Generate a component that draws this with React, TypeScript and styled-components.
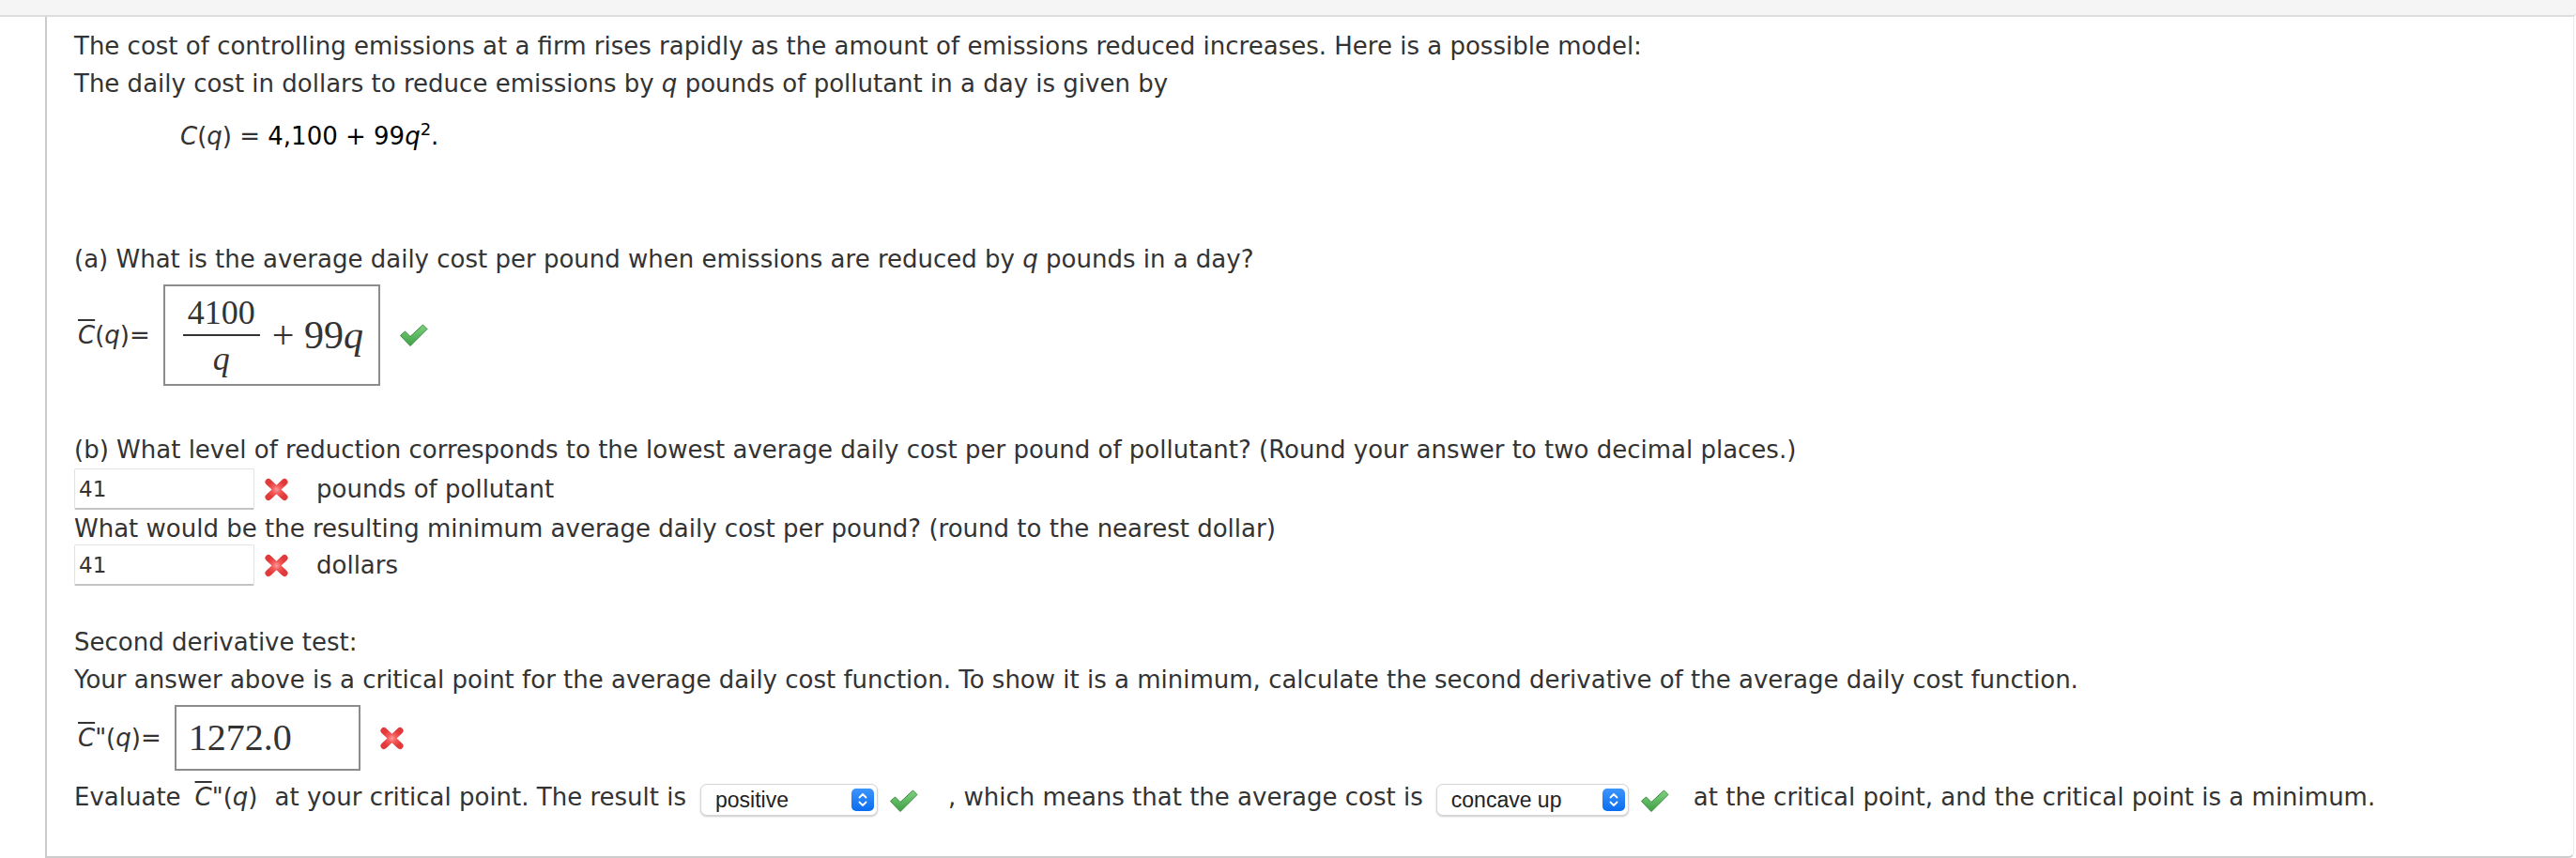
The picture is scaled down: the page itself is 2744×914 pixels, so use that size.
import React from 'react';
import styled, { createGlobalStyle } from 'styled-components';

const GlobalStyle = createGlobalStyle`
	html, body {
		margin: 0;
		padding: 0;
		background: #fff;
	}
	body {
		font-family: 'DejaVu Sans', Verdana, sans-serif;
		color: #333;
	}
`;

const TopStrip = styled.div`
	height: 16px;
	background: #f5f5f5;
	border-bottom: 2px solid #ddd;
	border-bottom-right-radius: 4px;
`;

const Panel = styled.div`
	box-sizing: border-box;
	height: 896px;
	margin: 0 2px 0 48px;
	border-left: 2px solid #ccc;
	border-right: 1px solid #ececec;
	border-bottom: 2px solid #ccc;
	border-bottom-right-radius: 6px;
	padding: 11px 0 0 29px;
	font-size: 26px;
	line-height: 40px;
	color: #333;
`;

const Line = styled.div<{ $top?: number; $indent?: number }>`
	margin-top: ${(p) => p.$top ?? 0}px;
	padding-left: ${(p) => p.$indent ?? 0}px;
	white-space: nowrap;
`;

const Var = styled.i`
	font-style: italic;
`;

const Dark = styled.span`
	color: #000;
`;

const Sup = styled.sup`
	font-size: 18px;
	line-height: 0;
	vertical-align: 10px;
`;

const Bar = styled.span`
	font-style: italic;
	text-decoration: overline;
	text-decoration-thickness: 2px;
`;

const AnswerRow = styled.div<{ $top: number; $height: number }>`
	display: flex;
	align-items: center;
	margin-top: ${(p) => p.$top}px;
	height: ${(p) => p.$height}px;
`;

const MathLabel = styled.span`
	margin-left: 4px;
	white-space: nowrap;
`;

const AnswerBox = styled.div<{ $w: number; $h: number; $pad: number }>`
	box-sizing: border-box;
	display: flex;
	align-items: center;
	width: ${(p) => p.$w}px;
	height: ${(p) => p.$h}px;
	margin-left: 14px;
	padding-left: ${(p) => p.$pad}px;
	border: 2px solid #8c8c8c;
	font-family: 'Liberation Serif', 'Times New Roman', serif;
	font-size: 40px;
	line-height: 1;
	color: #333;
`;

const Frac = styled.span`
	display: inline-flex;
	flex-direction: column;
	align-items: center;
	padding: 0 5px;
	font-size: 36px;
	line-height: 1;
`;

const FracBar = styled.span`
	align-self: stretch;
	height: 2px;
	margin: 5px -5px 6px;
	background: #333;
`;

const MathTail = styled.span`
	margin-left: 13px;
	font-size: 42px;
	white-space: nowrap;
`;

const MathVar = styled.i`
	font-style: italic;
`;

const TextInput = styled.input`
	box-sizing: border-box;
	width: 192px;
	height: 44px;
	margin: 0;
	padding: 0 4px;
	border: 1px solid #e2e2e2;
	border-bottom: 2px solid #c4c4c4;
	border-radius: 2px;
	font-family: 'DejaVu Sans', Verdana, sans-serif;
	font-size: 23px;
	color: #333;
	background: #fff;
	outline: none;
`;

const Unit = styled.span`
	margin-left: 29px;
	white-space: nowrap;
`;

const Mark = styled.svg<{ $left: number; $down?: number }>`
	flex: none;
	margin-left: ${(p) => p.$left}px;
	margin-top: ${(p) => p.$down ?? 0}px;
`;

const EvalRow = styled.div`
	display: flex;
	align-items: center;
	height: 46px;
	margin-top: 2px;
	white-space: nowrap;
`;

const Phrase = styled.span<{ $left?: number }>`
	align-self: flex-start;
	margin-top: 6px;
	margin-left: ${(p) => p.$left ?? 0}px;
	line-height: 40px;
`;

const SelectBox = styled.div<{ $w: number; $left: number }>`
	box-sizing: border-box;
	align-self: flex-end;
	display: flex;
	align-items: center;
	justify-content: space-between;
	width: ${(p) => p.$w}px;
	height: 34px;
	margin-left: ${(p) => p.$left}px;
	padding: 0 3px 0 15px;
	border: 1px solid #d6d6d6;
	border-radius: 7px;
	box-shadow: 0 1px 2px rgba(0, 0, 0, 0.22);
	background: #fff;
	font-family: 'Liberation Sans', Arial, sans-serif;
	font-size: 23px;
	color: #222;
`;

const Check = ({ left, down }: { left: number; down?: number }) => (
	<Mark $left={left} $down={down} width='31' height='26' viewBox='0 0 31 26'>
		<defs>
			<linearGradient id='ck' x1='0' y1='0' x2='0' y2='1'>
				<stop offset='0' stopColor='#7fd27f' />
				<stop offset='1' stopColor='#3f9f45' />
			</linearGradient>
		</defs>
		<path d='M1.5 13.5 L6.5 9 L12 14.5 L25.5 2 L30 6.5 L12 24.5 Z' fill='url(#ck)' stroke='#3a8a3e' strokeWidth='1' strokeLinejoin='round' />
	</Mark>
);

const Cross = ({ left }: { left: number }) => (
	<Mark $left={left} width='27' height='25' viewBox='0 0 27 25'>
		<defs>
			<radialGradient id='cr' cx='0.5' cy='0.5' r='0.6'>
				<stop offset='0' stopColor='#ff9a9a' />
				<stop offset='0.45' stopColor='#f45a5a' />
				<stop offset='1' stopColor='#e23a3a' />
			</radialGradient>
		</defs>
		<path d='M5 4.5 L22 20.5 M22 4.5 L5 20.5' stroke='url(#cr)' strokeWidth='7' strokeLinecap='round' fill='none' />
	</Mark>
);

const Stepper = () => (
	<svg width='24' height='24' viewBox='0 0 24 24'>
		<defs>
			<linearGradient id='st' x1='0' y1='0' x2='0' y2='1'>
				<stop offset='0' stopColor='#3d95fb' />
				<stop offset='1' stopColor='#0a6cf0' />
			</linearGradient>
		</defs>
		<rect x='0' y='0' width='24' height='24' rx='5' fill='url(#st)' />
		<path d='M8.5 9.5 L12 6 L15.5 9.5 M8.5 14.5 L12 18 L15.5 14.5' stroke='#fff' strokeWidth='1.8' fill='none' strokeLinecap='round' strokeLinejoin='round' />
	</svg>
);

const Select = ({ value, width, left }: { value: string; width: number; left: number }) => (
	<SelectBox $w={width} $left={left}>
		<span>{value}</span>
		<Stepper />
	</SelectBox>
);

export default function App() {
	return (
		<>
			<GlobalStyle />
			<TopStrip />
			<Panel>
				<Line>
					The cost of controlling emissions at a firm rises rapidly as the amount of emissions reduced increases. Here is a possible model:
				</Line>
				<Line>
					The daily cost in dollars to reduce emissions by <Var>q</Var> pounds of pollutant in a day is given by
				</Line>
				<Line $top={16} $indent={113}>
					<Var>C</Var>(<Var>q</Var>) ={' '}
					<Dark>
						4,100 + 99<Var>q</Var>
						<Sup>2</Sup>.
					</Dark>
				</Line>

				<Line $top={91}>
					(a) What is the average daily cost per pound when emissions are reduced by <Var>q</Var> pounds in a day?
				</Line>
				<AnswerRow $top={7} $height={108}>
					<MathLabel>
						<Bar>C</Bar>(<Var>q</Var>)=
					</MathLabel>
					<AnswerBox $w={231} $h={108} $pad={19}>
						<Frac>
							<span>4100</span>
							<FracBar />
							<MathVar>q</MathVar>
						</Frac>
						<MathTail>
							+ 99<MathVar>q</MathVar>
						</MathTail>
					</AnswerBox>
					<Check left={20} />
				</AnswerRow>

				<Line $top={48}>
					(b) What level of reduction corresponds to the lowest average daily cost per pound of pollutant? (Round your answer to two decimal places.)
				</Line>
				<AnswerRow $top={0} $height={44}>
					<TextInput readOnly value='41' />
					<Cross left={10} />
					<Unit>pounds of pollutant</Unit>
				</AnswerRow>
				<Line>What would be the resulting minimum average daily cost per pound? (round to the nearest dollar)</Line>
				<AnswerRow $top={-3} $height={44}>
					<TextInput readOnly value='41' />
					<Cross left={10} />
					<Unit>dollars</Unit>
				</AnswerRow>

				<Line $top={40}>Second derivative test:</Line>
				<Line>
					Your answer above is a critical point for the average daily cost function. To show it is a minimum, calculate the second derivative of the average daily cost function.
				</Line>
				<AnswerRow $top={7} $height={70}>
					<MathLabel>
						<Bar>C</Bar>"(<Var>q</Var>)=
					</MathLabel>
					<AnswerBox $w={198} $h={70} $pad={13}>
						1272.0
					</AnswerBox>
					<Cross left={20} />
				</AnswerRow>

				<EvalRow>
					<Phrase>Evaluate</Phrase>
					<Phrase $left={15}>
						<Bar>C</Bar>"(<Var>q</Var>)
					</Phrase>
					<Phrase $left={18}>at your critical point. The result is</Phrase>
					<Select value='positive' width={189} left={15} />
					<Check left={12} down={14} />
					<Phrase $left={32}>, which means that the average cost is</Phrase>
					<Select value='concave up' width={205} left={14} />
					<Check left={12} down={14} />
					<Phrase $left={26}>at the critical point, and the critical point is a minimum.</Phrase>
				</EvalRow>
			</Panel>
		</>
	);
}
